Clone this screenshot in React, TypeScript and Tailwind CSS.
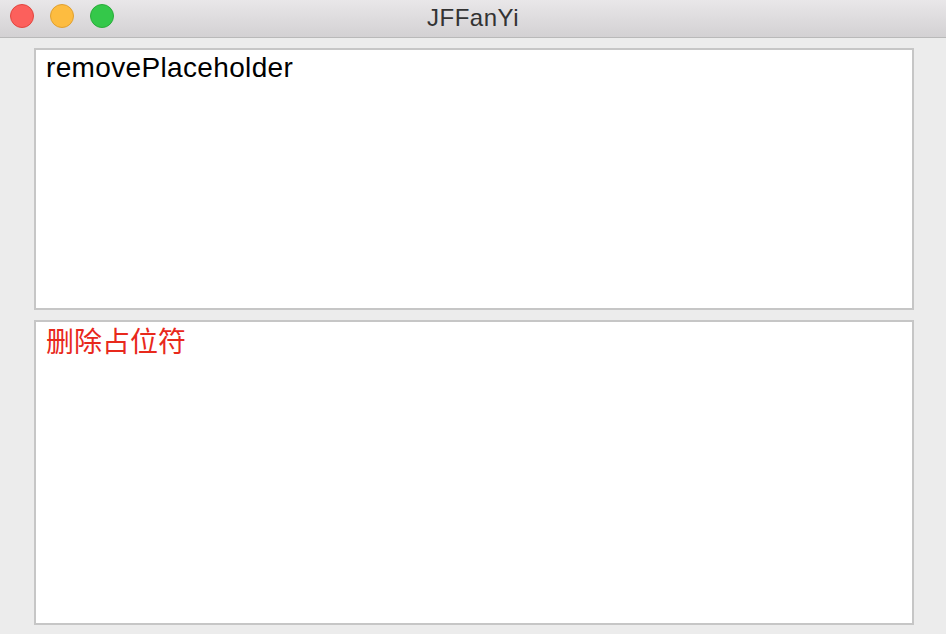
export default function App() {
  return (
    <div className="flex h-[634px] w-[946px] flex-col overflow-hidden bg-[#ececec] font-['Liberation_Sans','Noto_Sans_CJK_SC',sans-serif]">
      {/* title bar */}
      <div className="relative flex h-[38px] shrink-0 items-center justify-center border-b border-[#b9b9b9] bg-gradient-to-b from-[#e9e7e9] to-[#d3d1d3]">
        <div className="absolute left-[10px] top-[4px] flex gap-[16px]">
          <span className="h-[24px] w-[24px] rounded-full border border-[#e2463f] bg-[#fc605c]" />
          <span className="h-[24px] w-[24px] rounded-full border border-[#e0a030] bg-[#fdbc40]" />
          <span className="h-[24px] w-[24px] rounded-full border border-[#2aac3a] bg-[#34c84a]" />
        </div>
        <span className="mb-[2px] text-[24px] tracking-[0.5px] text-[#333333]">JFFanYi</span>
      </div>

      <div className="flex flex-1 flex-col gap-[10px] pb-[9px] pl-[34px] pr-[32px] pt-[10px]">
        <div className="h-[262px] border-2 border-[#c6c6c6] bg-white px-[10px] pt-[2px]">
          <p className="text-[28px] leading-[32px] tracking-[0.35px] text-black">removePlaceholder</p>
        </div>
        <div className="flex-1 border-2 border-[#c6c6c6] bg-white px-[10px] pt-[5px]">
          <p className="text-[28px] leading-[32px] text-[#e8291c]">删除占位符</p>
        </div>
      </div>
    </div>
  );
}
